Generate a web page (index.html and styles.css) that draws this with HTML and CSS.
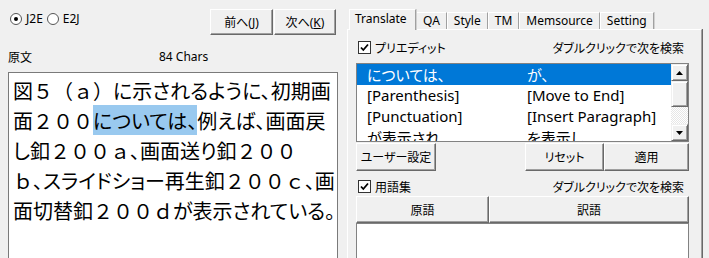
FILE: index.html
```html
<!DOCTYPE html>
<html lang="ja">
<head>
<meta charset="utf-8">
<title>Translate</title>
<link rel="stylesheet" href="styles.css">
</head>
<body>
<div class="app">
  <section class="left">
    <div class="top-row">
      <div class="radios">
        <label class="radio"><span class="radio-dot on"></span>J2E</label>
        <label class="radio"><span class="radio-dot"></span>E2J</label>
      </div>
      <div class="nav-buttons">
        <button class="btn btn-prev">前へ(<u>J</u>)</button>
        <button class="btn btn-next">次へ(<u>K</u>)</button>
      </div>
    </div>
    <div class="src-head">
      <span class="jp">原文</span>
      <span>84 Chars</span>
    </div>
    <div class="src-box">図５（ａ）<span class="k">に示されるように、</span>初期画<br>面２００<span class="hl k">については、</span><span class="k">例えば、</span>画面戻<br><span class="k">し</span>釦２００ａ<span class="k">、画面送り</span>釦２００<br>ｂ<span class="k">、スライドショー再生釦</span>２００ｃ<span class="k">、</span>画<br>面切替釦２００ｄ<span class="k">が表示されている。</span></div>
  </section>

  <section class="right">
    <div class="tabs">
      <div class="tab active">Translate</div>
      <div class="tab">QA</div>
      <div class="tab">Style</div>
      <div class="tab">TM</div>
      <div class="tab">Memsource</div>
      <div class="tab">Setting</div>
    </div>
    <div class="tab-body">
      <div class="opt-row">
        <label class="check"><span class="box"><svg viewBox="0 0 11 11" width="11" height="11"><path d="M2 5.5 L4.3 8 L9 2.5" fill="none" stroke="#000" stroke-width="1.8"/></svg></span><span class="jp">プリエディット</span></label>
        <span class="jp hint">ダブルクリックで次を検索</span>
      </div>
      <div class="list">
        <div class="rows">
          <div class="row selected"><span class="jp">については、</span><span class="jp">が、</span></div>
          <div class="row"><span>[Parenthesis]</span><span>[Move to End]</span></div>
          <div class="row"><span>[Punctuation]</span><span>[Insert Paragraph]</span></div>
          <div class="row"><span class="jp">が表示され</span><span class="jp">を表示し</span></div>
        </div>
        <div class="scroll">
          <div class="sb-btn"><svg viewBox="0 0 7 4" width="7" height="4"><path d="M0 4 L3.5 0 L7 4 Z" fill="#000"/></svg></div>
          <div class="sb-thumb"></div>
          <div class="sb-track"></div>
          <div class="sb-btn"><svg viewBox="0 0 7 4" width="7" height="4"><path d="M0 0 L7 0 L3.5 4 Z" fill="#000"/></svg></div>
        </div>
      </div>
      <div class="btn-row">
        <button class="btn jp btn-user">ユーザー設定</button>
        <button class="btn jp btn-reset">リセット</button>
        <button class="btn jp btn-apply">適用</button>
      </div>
      <div class="opt-row opt-row2">
        <label class="check"><span class="box"><svg viewBox="0 0 11 11" width="11" height="11"><path d="M2 5.5 L4.3 8 L9 2.5" fill="none" stroke="#000" stroke-width="1.8"/></svg></span><span class="jp">用語集</span></label>
        <span class="jp hint">ダブルクリックで次を検索</span>
      </div>
      <div class="gl-head">
        <div class="cell jp">原語</div>
        <div class="cell jp">訳語</div>
      </div>
      <div class="gl-list"></div>
    </div>
  </section>
</div>
</body>
</html>
```

FILE: styles.css
```css
html, body {
  margin: 0;
  padding: 0;
}
body {
  background: #f0f0f0;
  font-family: "Noto Sans", "Noto Sans CJK JP", sans-serif;
  font-size: 12px;
  color: #000;
  width: 709px;
  height: 258px;
  overflow: hidden;
}
.jp {
  font-family: "Noto Sans CJK JP", sans-serif;
  font-feature-settings: "palt";
}
.app {
  display: flex;
  height: 258px;
  overflow: hidden;
}

/* ---------- left ---------- */
.left {
  width: 347px;
  flex-shrink: 0;
  box-sizing: border-box;
  padding: 9px 11px 0 8px;
}
.top-row {
  display: flex;
  justify-content: space-between;
  align-items: flex-start;
}
.radios {
  display: flex;
  align-items: center;
  margin-top: 3px;
  margin-left: 2px;
}
.radio {
  display: flex;
  align-items: center;
  gap: 4px;
  margin-right: 4px;
  height: 14px;
  line-height: 14px;
}
.radio-dot {
  width: 12px;
  height: 12px;
  box-sizing: border-box;
  border-radius: 50%;
  border: 1px solid #555;
  background: #fff;
  display: flex;
  align-items: center;
  justify-content: center;
}
.radio-dot.on::after {
  content: "";
  width: 4px;
  height: 4px;
  border-radius: 50%;
  background: #000;
}
.nav-buttons {
  display: flex;
  gap: 1px;
}
.btn {
  height: 26px;
  box-sizing: border-box;
  border: 1px solid;
  border-color: #fff #696969 #696969 #fff;
  box-shadow: inset -1px -1px 0 #a0a0a0;
  background: #f0f0f0;
  display: flex;
  align-items: center;
  justify-content: center;
  font-family: "Noto Sans", "Noto Sans CJK JP", sans-serif;
  font-feature-settings: "palt";
  font-size: 12px;
  color: #000;
  padding: 0;
}
.btn-prev { width: 63px; }
.btn-next { width: 62px; }
.src-head {
  display: grid;
  grid-template-columns: 151px auto;
  margin-top: 15px;
  height: 14px;
  line-height: 14px;
}
.src-box {
  margin-top: 8px;
  width: 330px;
  height: 200px;
  box-sizing: border-box;
  border: 1px solid #7a7a7a;
  background: #fff;
  padding: 3px 0 0 4px;
  font-family: "Noto Sans CJK JP", sans-serif;
  font-size: 20px;
  line-height: 30px;
  white-space: nowrap;
  overflow: hidden;
}
.k {
  font-feature-settings: "palt";
}
.hl {
  background: #99c9ef;
  padding: 1px 0 0;
}

/* ---------- right ---------- */
.right {
  width: 355px;
  flex-shrink: 0;
  display: flex;
  flex-direction: column;
  min-height: 0;
}
.tabs {
  display: flex;
  flex-shrink: 0;
  align-items: flex-end;
  height: 29px;
  padding-left: 2px;
}
.tab {
  height: 17px;
  line-height: 16px;
  box-sizing: border-box;
  padding: 0 6px;
  border: 1px solid;
  border-bottom: none;
  border-color: #fff #a0a0a0 transparent #fff;
  box-shadow: 1px 0 0 #d0d0d0;
  background: #f0f0f0;
  font-size: 12px;
}
.tab.active {
  position: relative;
  z-index: 2;
  height: 21px;
  line-height: 17px;
  margin-bottom: -1px;
  padding: 0 7px 0 5px;
  width: 67px;
}
.tab-body {
  flex: 1 0 auto;
  box-sizing: border-box;
  border-top: 1px solid #fff;
  border-left: 1px solid #fff;
  border-right: 1px solid #a0a0a0;
  box-shadow: 1px 0 0 #696969;
  padding: 0 12px 0 8px;
}
.opt-row {
  display: flex;
  align-items: center;
  justify-content: space-between;
  height: 13px;
  margin-top: 11px;
  padding: 0 5px 0 2px;
}
.opt-row2 {
  margin-top: 9px;
}
.check {
  display: flex;
  align-items: center;
  gap: 4px;
}
.box {
  width: 13px;
  height: 13px;
  box-sizing: border-box;
  border: 1px solid #333;
  background: #fff;
  display: block;
}
.box svg {
  display: block;
}
.list {
  margin-top: 9px;
  height: 79px;
  box-sizing: border-box;
  border: 1px solid #828282;
  background: #fff;
  display: flex;
}
.rows {
  flex: 1;
  overflow: hidden;
}
.row {
  display: grid;
  grid-template-columns: 160px 1fr;
  height: 21px;
  line-height: 21px;
  padding-left: 10px;
  font-size: 15px;
  white-space: nowrap;
}
.row.selected {
  background: #0078d7;
  color: #fff;
}
.scroll {
  width: 17px;
  display: flex;
  flex-direction: column;
}
.sb-btn, .sb-thumb {
  box-sizing: border-box;
  border: 1px solid;
  border-color: #f0f0f0 #696969 #696969 #f0f0f0;
  box-shadow: inset 1px 1px 0 #fff, inset -1px -1px 0 #a0a0a0;
  background: #f0f0f0;
}
.sb-btn {
  height: 17px;
  display: flex;
  align-items: center;
  justify-content: center;
}
.sb-btn svg {
  display: block;
}
.sb-thumb {
  height: 26px;
}
.sb-track {
  flex: 1;
  background: repeating-conic-gradient(#fff 0 25%, #e6e6e6 0 50%) 0 0 / 2px 2px;
}
.btn-row {
  display: flex;
  margin-top: 1px;
}
.btn-row .btn {
  height: 28px;
}
.btn-user { width: 80px; }
.btn-reset { width: 79px; margin-left: auto; }
.btn-apply { width: 85px; }
.gl-head {
  display: grid;
  grid-template-columns: 133px 1fr;
  margin-top: 3px;
  height: 27px;
}
.cell {
  box-sizing: border-box;
  border: 1px solid;
  border-color: #fff #696969 #696969 #fff;
  box-shadow: inset -1px -1px 0 #a0a0a0;
  background: #f0f0f0;
  display: flex;
  align-items: center;
  justify-content: center;
  font-size: 12px;
}
.gl-list {
  height: 60px;
  box-sizing: border-box;
  border: 1px solid #828282;
  border-bottom: none;
  background: #fff;
}
```
